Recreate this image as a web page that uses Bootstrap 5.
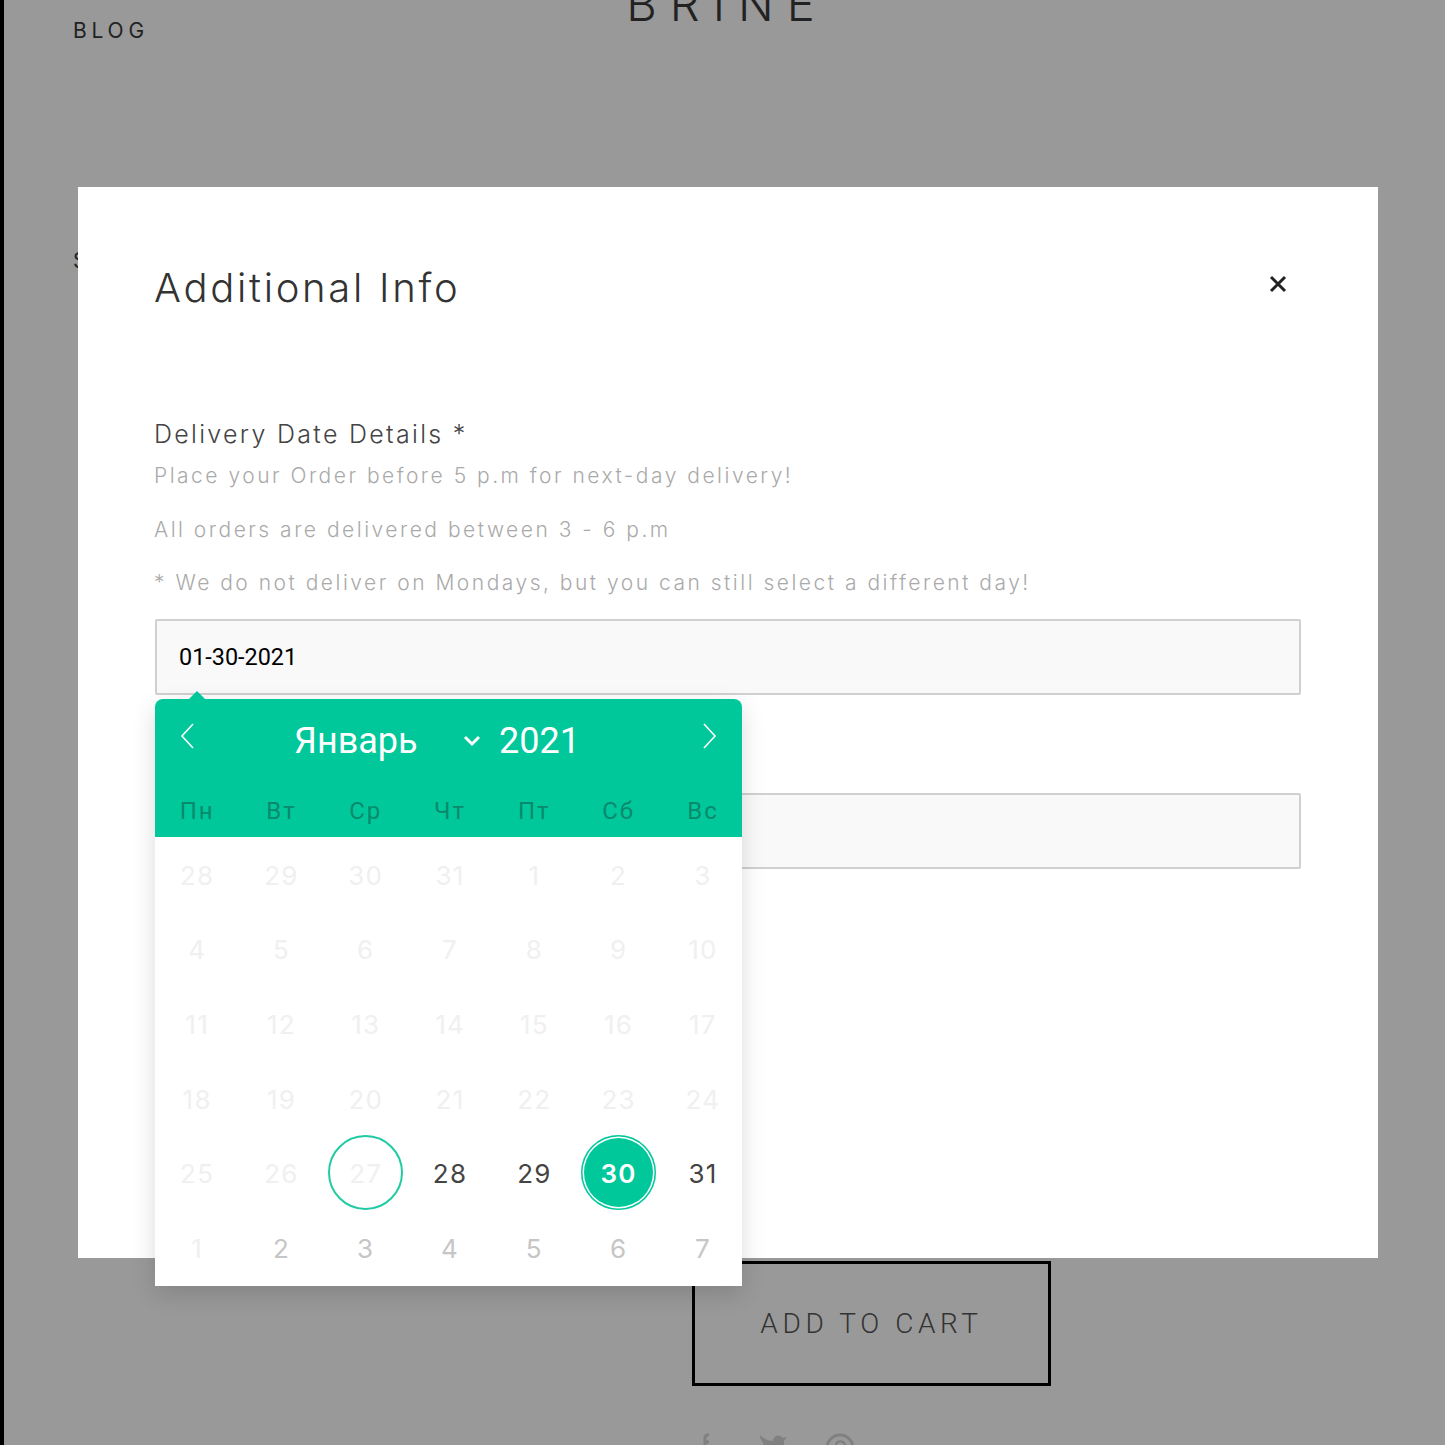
<!DOCTYPE html>
<html lang="en">
<head>
<meta charset="utf-8">
<title>Additional Info</title>
<link href="https://cdn.jsdelivr.net/npm/bootstrap@5.3.0/dist/css/bootstrap.min.css" rel="stylesheet">
<style>
html,body{margin:0;height:1445px;overflow:hidden}
body{font-family:Inter,"Noto Sans",sans-serif;font-weight:300;background:#999}
.stage{position:relative;height:1445px;overflow:hidden;background:#999;border-left:4px solid #000}
.top-row{display:grid;grid-template-columns:1fr auto 1fr;height:187px;padding:0 69px}
.nav-text{font-size:21px;line-height:26px;letter-spacing:4.8px;color:#222;font-weight:400}
.blog{margin-top:18px}
.brand{margin-top:-24px;text-align:center;font-size:47px;line-height:56px;letter-spacing:13px;color:#222;white-space:nowrap;padding-left:5px}
.shop{margin:61px 0 0 69px;height:26px}
.buy{margin:987px 0 0 688px;width:359px}
.buy-btn{display:block;width:359px;height:125px;border:3.5px solid #000;border-radius:0;background:transparent;color:#333;font-size:28px;letter-spacing:4.6px;font-weight:300;font-family:Roboto,sans-serif}
.social{margin:47px 0 0 2px;gap:37px}
.social svg{display:block}
.social svg:first-child{margin-right:7px}
.add-modal{position:absolute;left:74px;top:187px;width:1300px;height:1071px;background:#fff;border:0;border-radius:0;padding:77px 76px 0 76px}
.add-title{font-size:40px;line-height:48px;letter-spacing:2.7px;font-weight:300;color:#333;margin:0}
.close-x{border:0;background:transparent;padding:0;margin:-4px 0 0 0;width:48px;height:48px;line-height:0}
.head{margin-bottom:107px}
.lbl{font-size:25px;line-height:30px;letter-spacing:2.3px;font-weight:300;color:#444;margin:0 0 12px;display:block}
.hint{font-size:21px;line-height:30px;letter-spacing:2.5px;color:#aaa;margin:0 0 23.5px;font-weight:300}
.fld{height:76px;background:#f9f9f9;border:2px solid #d0d0d0;border-radius:2px;font-family:Roboto,sans-serif;font-weight:400;font-size:23.4px;padding:0 22px;color:#000;width:1146px;margin-left:1px;margin-top:-2.5px}
.fld2{margin-top:98px}
.cal{position:absolute;left:77px;top:512px;width:587px;height:587px;background:#fff;box-shadow:0 8px 24px rgba(0,0,0,.14);border-radius:8px 8px 0 0}
.cal::before{content:"";position:absolute;left:34px;top:-8px;border:8px solid transparent;border-top:0;border-bottom-color:#00c89b}
.cal-head{height:138px;background:#00c89b;border-radius:8px 8px 0 0;color:#fff;position:relative}
.cal-month{height:84px;font-size:36px;font-weight:400;font-family:Roboto,sans-serif;padding:0 24px}
.cal-month svg{display:block}
.cal-month .arr{margin-bottom:10px}
.m-name{width:122px;margin-left:97px;white-space:nowrap}
.m-chev{margin-left:47px}
.m-year{margin-left:18px;margin-right:auto}
.cal-grid{display:grid;grid-template-columns:repeat(7,84.3px);margin:0}
.wd{text-align:center;font-size:24px;line-height:56px;letter-spacing:2px;color:#0a8a6c;font-weight:400;font-family:Roboto,sans-serif}
.d{height:74.6px;padding-top:2px;display:flex;align-items:center;justify-content:center;font-size:26px;letter-spacing:1.2px;color:#f0f0f0;font-weight:400;position:relative}
.d.on{color:#444}
.d.nx{color:#c6c6c6}
.d.today::after{content:"";position:absolute;left:50%;top:50%;width:75px;height:75px;margin:-37.5px 0 0 -37.5px;border:2px solid #1fcba3;border-radius:50%}
.d.sel{color:#fff;font-weight:600}
.d.sel::before{content:"";position:absolute;left:50%;top:50%;width:75px;height:75px;margin:-37.5px 0 0 -37.5px;border-radius:50%;background:#00c89b;box-shadow:inset 0 0 0 1.5px #00c89b,inset 0 0 0 3px #fff}
.d.sel span{position:relative;z-index:1}
</style>
</head>
<body>
<div class="stage">
  <div class="top-row">
    <div class="nav-text blog">BLOG</div>
    <div class="brand">BRINE</div>
    <div></div>
  </div>
  <div class="nav-text shop">SHOP</div>
  <div class="buy">
    <button type="button" class="btn buy-btn">ADD TO CART</button>
    <div class="d-flex social">
      <svg width="20" height="24" viewBox="0 0 20 24"><path d="M11 24V9h4M15 2h-1c-2 0-3 1-3 3v4" fill="none" stroke="#808080" stroke-width="3"/></svg>
      <svg width="30" height="24" viewBox="0 0 30 24"><path d="M2 2c4 4 8 6 13 6 0-5 6-8 10-3l4-1-3 4v3C25 20 12 24 2 19c4 0 7-1 9-3-5-2-6-5-6-7C3 8 2 5 2 2z" fill="#808080"/></svg>
      <svg width="30" height="30" viewBox="0 0 30 30"><circle cx="15" cy="15" r="13" fill="none" stroke="#808080" stroke-width="3"/><path d="M11 12c0-5 9-5 9 1 0 4-5 5-6 2" fill="none" stroke="#808080" stroke-width="2.4"/></svg>
    </div>
  </div>

  <div class="modal-content add-modal">
    <div class="d-flex justify-content-between head">
      <h2 class="add-title">Additional Info</h2>
      <button type="button" class="close-x" aria-label="Close">
        <svg width="18" height="18" viewBox="0 0 18 18"><path d="M2 2l14 14M16 2L2 16" stroke="#222" stroke-width="3" fill="none"/></svg>
      </button>
    </div>
    <label class="lbl">Delivery Date Details *</label>
    <p class="hint">Place your Order before 5 p.m for next-day delivery!</p>
    <p class="hint">All orders are delivered between 3 - 6 p.m</p>
    <p class="hint">* We do not deliver on Mondays, but you can still select a different day!</p>
    <input class="form-control fld" type="text" value="01-30-2021">
    <input class="form-control fld fld2" type="text" value="">

    <div class="cal">
      <div class="cal-head">
        <div class="d-flex align-items-center cal-month">
          <svg class="arr" width="18" height="28" viewBox="0 0 18 28"><path d="M14 2L3 14l11 12" fill="none" stroke="#fff" stroke-width="1.6"/></svg>
          <span class="m-name">Январь</span>
          <svg class="m-chev" width="18" height="12" viewBox="0 0 18 12"><path d="M2 2l7 7 7-7" fill="none" stroke="#fff" stroke-width="3"/></svg>
          <span class="m-year">2021</span>
          <svg class="arr" width="18" height="28" viewBox="0 0 18 28"><path d="M4 2l11 12L4 26" fill="none" stroke="#fff" stroke-width="1.6"/></svg>
        </div>
        <div class="cal-grid">
          <div class="wd">Пн</div><div class="wd">Вт</div><div class="wd">Ср</div><div class="wd">Чт</div><div class="wd">Пт</div><div class="wd">Сб</div><div class="wd">Вс</div>
        </div>
      </div>
      <div class="cal-grid">
        <div class="d">28</div><div class="d">29</div><div class="d">30</div><div class="d">31</div><div class="d">1</div><div class="d">2</div><div class="d">3</div>
        <div class="d">4</div><div class="d">5</div><div class="d">6</div><div class="d">7</div><div class="d">8</div><div class="d">9</div><div class="d">10</div>
        <div class="d">11</div><div class="d">12</div><div class="d">13</div><div class="d">14</div><div class="d">15</div><div class="d">16</div><div class="d">17</div>
        <div class="d">18</div><div class="d">19</div><div class="d">20</div><div class="d">21</div><div class="d">22</div><div class="d">23</div><div class="d">24</div>
        <div class="d">25</div><div class="d">26</div><div class="d today">27</div><div class="d on">28</div><div class="d on">29</div><div class="d sel"><span>30</span></div><div class="d on">31</div>
        <div class="d">1</div><div class="d nx">2</div><div class="d nx">3</div><div class="d nx">4</div><div class="d nx">5</div><div class="d nx">6</div><div class="d nx">7</div>
      </div>
    </div>
  </div>
</div>
<script src="https://cdn.jsdelivr.net/npm/bootstrap@5.3.0/dist/js/bootstrap.bundle.min.js"></script>
</body>
</html>
